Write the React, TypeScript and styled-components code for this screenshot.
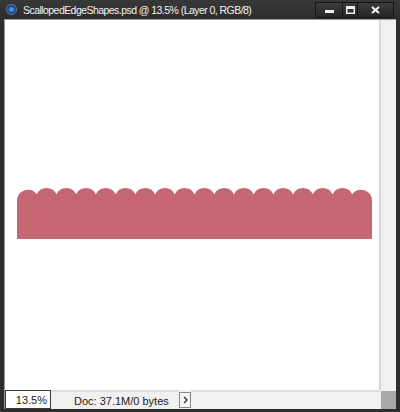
import React from "react";
import styled, { createGlobalStyle } from "styled-components";

const GlobalStyle = createGlobalStyle`
  html, body {
    margin: 0;
    padding: 0;
    background: #2b2b2b;
  }
  * { box-sizing: border-box; }
`;

const Window = styled.div`
  width: 400px;
  height: 412px;
  background: #2e2e2e;
  display: flex;
  flex-direction: column;
  font-family: "Liberation Sans", Arial, sans-serif;
  padding: 0 4px 3px 4px;
`;

const TitleBar = styled.div`
  height: 19px;
  display: flex;
  align-items: center;
  background: linear-gradient(#383838, #2d2d2d);
  margin: 0 -4px;
  padding-left: 6px;
  flex-shrink: 0;
`;

const AppIcon = styled.div`
  width: 11px;
  height: 11px;
  border-radius: 50%;
  background: radial-gradient(circle at 50% 50%, #4f8fe0 0 30%, #1d4f9a 45%, #0e2a55 100%);
  border: 1px solid #6a7f9c;
  margin-right: 6px;
`;

const Title = styled.div`
  color: #f2f2f2;
  font-size: 10.5px;
  letter-spacing: -0.55px;
  flex: 1;
  white-space: nowrap;
`;

const Buttons = styled.div`
  display: flex;
  align-self: flex-start;
  margin-top: 2px;
  margin-right: 6px;
  border: 1px solid #151515;
  border-radius: 0 0 3px 3px;
  overflow: hidden;
`;

const WinButton = styled.div<{ $w: number }>`
  width: ${(p) => p.$w}px;
  height: 14px;
  display: flex;
  align-items: center;
  justify-content: center;
  background: linear-gradient(#3c3c3c, #262626);
  & + & {
    border-left: 1px solid #151515;
  }
`;

const Body = styled.div`
  flex: 1;
  display: flex;
  min-height: 0;
  border-top: 1px solid #9a9a9a;
  border-left: 1px solid #9a9a9a;
`;

const Canvas = styled.div`
  flex: 1;
  background: #ffffff;
  padding-top: 168px;
  padding-left: 12px;
`;

const VScroll = styled.div`
  width: 17px;
  background: #f0f0f0;
  border-left: 2px solid #d6d6d6;
`;

const StatusRow = styled.div`
  height: 19px;
  display: flex;
  align-items: stretch;
  background: #f0f0f0;
  border-left: 1px solid #9a9a9a;
  flex-shrink: 0;
`;

const ZoomField = styled.div`
  width: 46px;
  background: #ffffff;
  border: 1px solid #3a3a3a;
  font-size: 11px;
  color: #222;
  display: flex;
  align-items: center;
  justify-content: flex-end;
  padding-right: 3px;
`;

const DocInfo = styled.div`
  width: 128px;
  font-size: 11px;
  color: #222;
  display: flex;
  align-items: center;
  padding-left: 23px;
  border-top: 2px solid #dcdcdc;
`;

const ArrowButton = styled.div`
  width: 12px;
  margin-top: 2px;
  height: 16px;
  border: 1px solid #888;
  background: #f4f4f4;
  display: flex;
  align-items: center;
  justify-content: center;
`;

const HScroll = styled.div`
  flex: 1;
  border-top: 2px solid #dcdcdc;
  background: #f2f2f2;
`;

const Corner = styled.div`
  width: 15px;
  margin-left: 1px;
  margin-top: 1px;
  background: #a9a9a9;
`;

const BUMPS = 18;
const W = 355;
const H = 51;

function ScallopShape() {
  const s = W / BUMPS;
  const r = 11;
  const cy = 11;
  const dy = Math.sqrt(r * r - (s / 2) * (s / 2));
  let d = `M0 ${H} L0 ${cy + 1}`;
  d += ` A${r} ${r} 0 0 1 ${s} ${cy - dy}`;
  for (let i = 1; i < BUMPS; i++) {
    const last = i === BUMPS - 1;
    d += ` A${r} ${r} 0 0 1 ${last ? W : (i + 1) * s} ${last ? cy + 1 : cy - dy}`;
  }
  d += ` L${W} ${H} Z`;
  return (
    <svg width={W} height={H} viewBox={`0 0 ${W} ${H}`}>
      <path d={d} fill="#c66672" />
    </svg>
  );
}

export default function App() {
  return (
    <>
      <GlobalStyle />
      <Window>
        <TitleBar>
          <AppIcon />
          <Title>ScallopedEdgeShapes.psd @ 13.5% (Layer 0, RGB/8)</Title>
          <Buttons>
            <WinButton $w={26}>
              <svg width="9" height="6"><rect x="0" y="3" width="9" height="3" fill="#f0f0f0" /></svg>
            </WinButton>
            <WinButton $w={15}>
              <svg width="9" height="8"><rect x="0.75" y="0.75" width="7.5" height="6.5" fill="none" stroke="#f0f0f0" strokeWidth="1.5" /><rect x="1" y="1" width="7" height="2" fill="#f0f0f0" /></svg>
            </WinButton>
            <WinButton $w={36}>
              <svg width="9" height="8"><path d="M1 1 L8 7 M8 1 L1 7" stroke="#f4f4f4" strokeWidth="2" /></svg>
            </WinButton>
          </Buttons>
        </TitleBar>
        <Body>
          <Canvas>
            <ScallopShape />
          </Canvas>
          <VScroll />
        </Body>
        <StatusRow>
          <ZoomField>13.5%</ZoomField>
          <DocInfo>Doc: 37.1M/0 bytes</DocInfo>
          <ArrowButton>
            <svg width="5" height="8"><path d="M1 1 L4 4 L1 7" fill="none" stroke="#222" strokeWidth="1.2" /></svg>
          </ArrowButton>
          <HScroll />
          <Corner />
        </StatusRow>
      </Window>
    </>
  );
}
